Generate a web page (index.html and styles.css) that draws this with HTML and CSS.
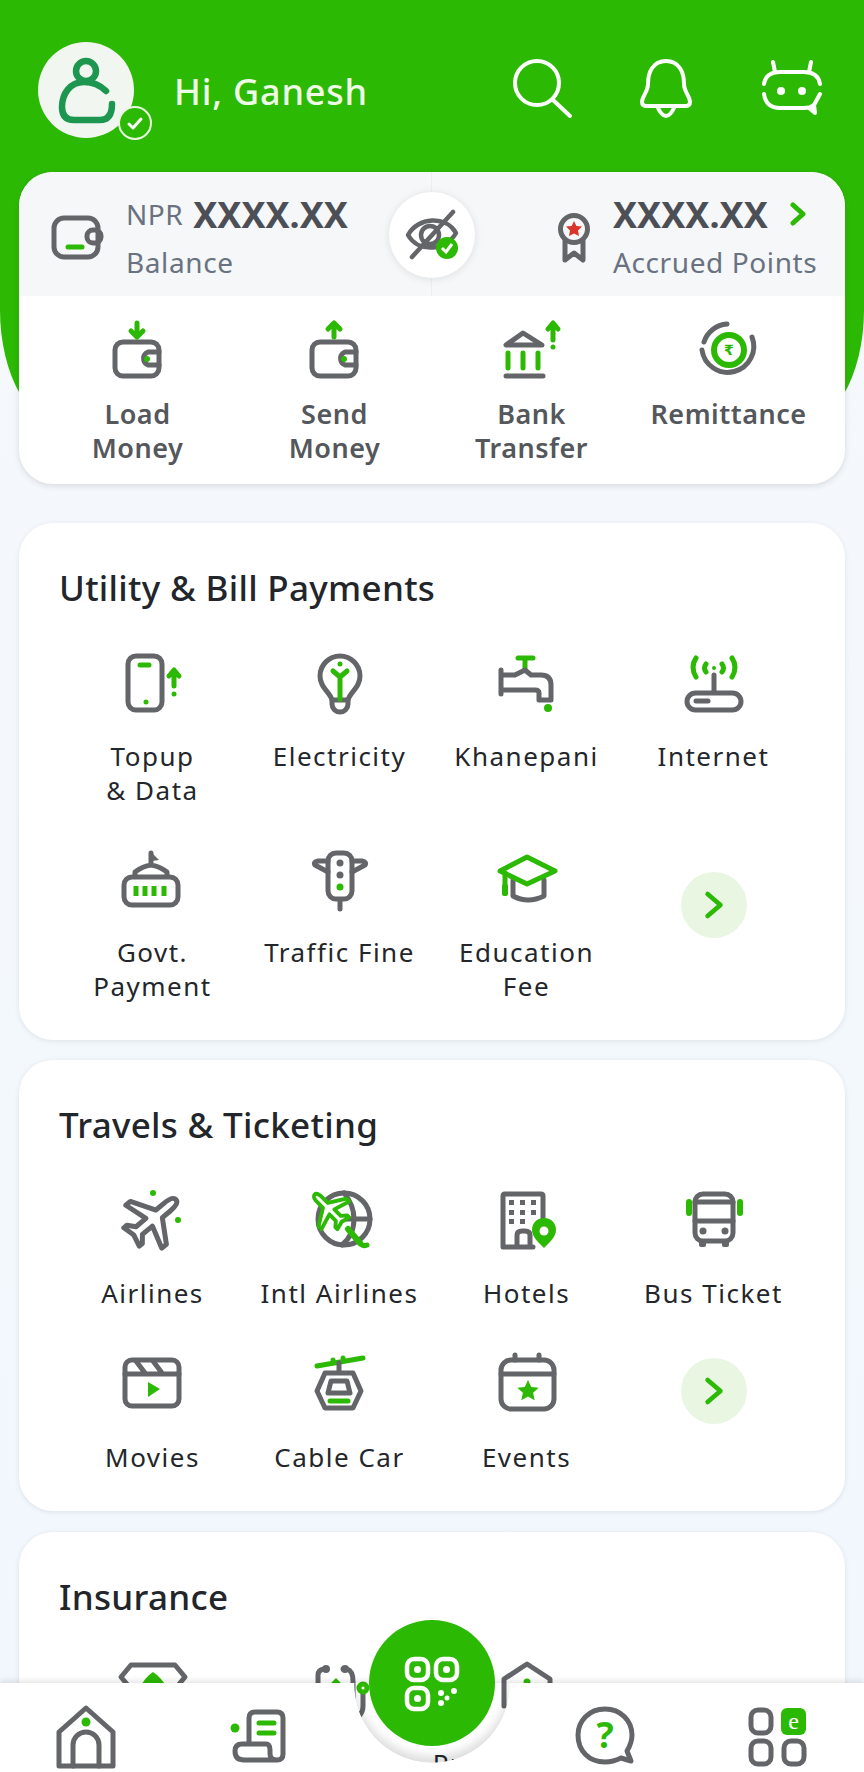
FILE: index.html
```html
<!DOCTYPE html>
<html lang="en">
<head>
<meta charset="UTF-8">
<meta name="viewport" content="width=device-width,initial-scale=1">
<title>Home</title>
<link rel="stylesheet" href="styles.css">
</head>
<body>
<div class="app">
  <div class="greenBg"></div>

  <!-- header -->
  <header class="top">
    <div class="avatar">
      <svg width="96" height="96" viewBox="0 0 96 96"><circle class="av" cx="48" cy="29" r="10"/><path class="av" d="M68 49C62 43 54 40 46 40C32 40 24 52 24 65Q24 78 36 78H62Q74 78 74 62"/></svg>
      <span class="tick"><svg width="34" height="34" viewBox="0 0 34 34"><circle cx="17" cy="17" r="16" fill="#2cb903" stroke="#e8f8e0" stroke-width="2"/><path d="M11 18l4 4 8-9" fill="none" stroke="#fff" stroke-width="3" stroke-linecap="round" stroke-linejoin="round"/></svg></span>
    </div>
    <div class="hi">Hi, Ganesh</div>
    <div class="topIcons">
      <svg class="ic w" viewBox="0 0 64 64"><circle cx="27" cy="25" r="22"/><path d="M43 42L60 58"/></svg>
      <svg class="ic w" viewBox="0 0 64 64"><path d="M31 3C18 3 13 14 13 26C13 34 7 38 7 44Q7 48 12 48H50Q55 48 55 44C55 38 49 34 49 26C49 14 44 3 31 3Z"/><path d="M22 48Q31 68 40 48"/></svg>
      <svg class="ic w" viewBox="0 0 64 64"><path d="M4 26Q6 14 20 14H44Q58 14 60 26"/><path d="M4 36Q6 50 20 50H44Q50 50 54 47L60 36"/><path d="M54 47L55 55L49 50"/><path d="M15 14L13 4M49 14L51 4"/><circle class="wf" cx="21" cy="33" r="4"/><circle class="wf" cx="42" cy="33" r="4"/></svg>
    </div>
  </header>

  <!-- balance card -->
  <section class="hero">
    <div class="bal">
      <div class="balCol left">
        <svg class="walletSm" viewBox="0 0 56 48"><rect class="g" x="4" y="4" width="44" height="39" rx="10"/><rect class="g" x="37" y="16" width="14" height="13" rx="6" fill="#f6f7f8"/><path class="a" d="M18 33H32"/></svg>
        <div>
          <div class="amt"><small>NPR</small> <b>XXXX.XX</b></div>
          <div class="sub">Balance</div>
        </div>
      </div>
      <div class="balCol right">
        <svg class="medal" viewBox="0 0 40 56"><circle class="g" cx="20" cy="19" r="13.500"/><path class="g" d="M11 31V50L20 43L29 50V31"/><path d="M20 11l2.400 5 5.600.6-4 3.900 1 5.600-5-2.700-5 2.700 1-5.600-4-3.900 5.600-.6z" fill="#d9352a"/></svg>
        <div>
          <div class="amt"><b>XXXX.XX</b><svg class="chev" viewBox="0 0 16 24"><path class="a" d="M3 3L13 12L3 21"/></svg></div>
          <div class="sub">Accrued Points</div>
        </div>
      </div>
      <div class="eye">
        <svg class="ic" viewBox="0 0 64 64"><path class="g thin" d="M8 32C18 14 46 12 56 30C46 48 18 50 8 32Z"/><circle class="g thin" cx="30" cy="32" r="9"/><path class="g thin" d="M12 54L53 9"/><circle cx="47" cy="45" r="11" fill="#2cb903"/><path d="M42 45L46 49L52 41" fill="none" stroke="#fff" stroke-width="3"/></svg>
      </div>
    </div>
    <div class="actions">
      <div class="act">
        <svg class="ic" viewBox="0 0 64 64"><rect class="g" x="9" y="22" width="44" height="34" rx="8"/><path class="g" d="M53 32H42A7 7 0 0 0 42 45H53"/><circle class="gf" cx="41" cy="39" r="3"/><path class="a" d="M31 3V15M25 11L31 17L37 11"/></svg>
        <span>Load<br>Money</span>
      </div>
      <div class="act">
        <svg class="ic" viewBox="0 0 64 64"><rect class="g" x="9" y="22" width="44" height="34" rx="8"/><path class="g" d="M53 32H42A7 7 0 0 0 42 45H53"/><circle class="gf" cx="41" cy="39" r="3"/><path class="a" d="M31 17V5M25 9L31 3L37 9"/></svg>
        <span>Send<br>Money</span>
      </div>
      <div class="act">
        <svg class="ic" viewBox="0 0 64 64"><path class="g" d="M23 13L6 25H42Z"/><path class="a" d="M8 33V48M23 33V48M38 33V48"/><path class="g" d="M6 56H43" stroke-width="6"/><path class="a" d="M53 20V4M48 9L53 3L58 9M53 27V27"/></svg>
        <span>Bank<br>Transfer</span>
      </div>
      <div class="act">
        <svg class="ic" viewBox="0 0 64 64"><path class="g" d="M30 4A26 26 0 0 0 7 22"/><path class="g" d="M55 17A26 26 0 1 1 5 30"/><circle class="a thick" cx="32" cy="30" r="15"/><text class="rs" x="32" y="35" text-anchor="middle">₹</text></svg>
        <span>Remittance</span>
      </div>
    </div>
  </section>

  <!-- utility -->
  <section class="card first">
    <h2>Utility &amp; Bill Payments</h2>
    <div class="grid">
      <div class="item">
        <svg class="ic" viewBox="0 0 64 64"><rect class="g" x="7" y="6" width="34" height="54" rx="8"/><path class="a" d="M19 15H28M53 36V21M48 26L53 20L58 26"/><circle class="gf" cx="25" cy="52" r="2.500"/><circle class="gf" cx="53" cy="44" r="2.500"/></svg>
        <span>Topup<br>&amp; Data</span>
      </div>
      <div class="item">
        <svg class="ic" viewBox="0 0 64 64"><path class="g" d="M24 50C22 42 12 38 12 26A20 20 0 0 1 52 26C52 38 42 42 40 50Z"/><path class="g" d="M24 50V54A8 8 0 0 0 40 54V50"/><path class="a" d="M32 49V27M25 21L32 27L39 21"/><circle class="gf" cx="32" cy="14" r="2.500"/></svg>
        <span>Electricity</span>
      </div>
      <div class="item">
        <svg class="ic" viewBox="0 0 64 64"><path class="a" d="M23 8H38M30 8V19"/><path class="g" d="M6 25H20L30 20L36 25H46Q56 25 56 35V50H44V43Q44 40 40 40H6M6 20V44"/><circle class="gf" cx="53" cy="58" r="4"/></svg>
        <span>Khanepani</span>
      </div>
      <div class="item">
        <svg class="ic" viewBox="0 0 64 64"><path class="g" d="M32 25V42"/><rect class="g" x="5" y="43" width="54" height="17" rx="8.500"/><path class="g" d="M14 51H26"/><path class="a" d="M14 8Q8 17 14 27M50 8Q56 17 50 27M24 14Q21 18 24 22M40 14Q43 18 40 22"/><circle class="gf" cx="32" cy="18" r="2"/></svg>
        <span>Internet</span>
      </div>
      <div class="item">
        <svg class="ic" viewBox="0 0 64 64"><rect class="g" x="3" y="31" width="54" height="28" rx="8"/><path class="g" d="M14 30V26Q22 20 30 19Q38 20 46 26V30M30 19V7"/><path class="fl" d="M30 6L38 14L31 15Z"/><path class="a bar" d="M15 40V50M24 40V50M33 40V50M43 40V50"/></svg>
        <span>Govt.<br>Payment</span>
      </div>
      <div class="item">
        <svg class="ic" viewBox="0 0 64 64"><rect class="g" x="20" y="7" width="24" height="46" rx="8"/><path class="g" d="M32 54V63M20 15H10Q5 16 7 19L20 26M44 15H54Q59 16 57 19L44 26"/><circle class="fl" cx="32" cy="17" r="3.500"/><circle class="fl" cx="32" cy="29" r="3.500"/><circle class="gf" cx="32" cy="41" r="3.500"/></svg>
        <span>Traffic Fine</span>
      </div>
      <div class="item">
        <svg class="ic" viewBox="0 0 64 64"><path class="g" d="M18 34V50Q33 58 49 50V34"/><path class="a" d="M32 11L60 25L32 38L5 25Z"/><path class="a" d="M10 27V40"/><rect class="gf" x="7" y="38" width="6" height="12" rx="2"/></svg>
        <span>Education<br>Fee</span>
      </div>
      <div class="item"><div class="more m1"><svg viewBox="0 0 24 32" width="22" height="30"><path class="a" d="M5 4L19 16L5 28"/></svg></div></div>
    </div>
  </section>

  <!-- travels -->
  <section class="card">
    <h2>Travels &amp; Ticketing</h2>
    <div class="grid tight">
      <div class="item">
        <svg class="ic" viewBox="0 0 64 64"><path class="g" transform="rotate(50 32 32)" d="M32 2C36 2 37 8 37 14V24L60 38V44L37 37V50L44 56V60L32 57L20 60V56L27 50V37L4 44V38L27 24V14C27 8 28 2 32 2Z"/><circle class="gf" cx="32" cy="6" r="3"/><circle class="gf" cx="57" cy="33" r="3"/></svg>
        <span>Airlines</span>
      </div>
      <div class="item">
        <svg class="ic" viewBox="0 0 64 64"><circle class="g" cx="36" cy="32" r="26"/><path class="g" d="M36 6Q46 18 46 32Q46 48 34 58M36 32H62"/><path class="a wht" transform="translate(-1 0) rotate(-45 22.400 22.400) scale(.7)" d="M32 2C36 2 37 8 37 14V24L60 38V44L37 37V50L44 56V60L32 57L20 60V56L27 50V37L4 44V38L27 24V14C27 8 28 2 32 2Z"/><path class="a thick" d="M40 42L52 56"/><path class="a" d="M52 56Q55 60 59 58"/></svg>
        <span>Intl Airlines</span>
      </div>
      <div class="item">
        <svg class="ic" viewBox="0 0 64 64"><path class="g" d="M8 60V9Q8 7 10 7H46Q48 7 48 9V34M8 60H38M22 60V48Q22 44 27 44H30Q35 44 35 48V60"/><g class="fl"><rect x="14" y="13" width="5" height="5"/><rect x="25" y="13" width="5" height="5"/><rect x="36" y="13" width="5" height="5"/><rect x="14" y="23" width="5" height="5"/><rect x="25" y="23" width="5" height="5"/><rect x="36" y="23" width="5" height="5"/><rect x="14" y="32" width="5" height="5"/><rect x="25" y="32" width="5" height="5"/></g><path class="gf" d="M49 31C57 31 61 37 61 43C61 50 54 56 49 61C44 56 37 50 37 43C37 37 41 31 49 31Z"/><circle cx="49" cy="44" r="4.500" fill="#fff"/></svg>
        <span>Hotels</span>
      </div>
      <div class="item">
        <svg class="ic" viewBox="0 0 64 64"><rect class="g" x="13" y="7" width="38" height="47" rx="8"/><path class="g" d="M13 15H51" stroke-width="6"/><path class="g" d="M13 34H51"/><circle class="fl" cx="21" cy="44" r="3.500"/><circle class="fl" cx="43" cy="44" r="3.500"/><rect class="fl" x="17" y="54" width="7" height="6" rx="2"/><rect class="fl" x="40" y="54" width="7" height="6" rx="2"/><path class="a thick" d="M7 15V26M58 15V26"/></svg>
        <span>Bus Ticket</span>
      </div>
      <div class="item">
        <svg class="ic" viewBox="0 0 64 64"><rect class="g" x="4" y="9" width="54" height="46" rx="7"/><path class="g" d="M4 23H58M15 10L24 22M32 10L41 22"/><path class="gf" d="M27 31L39 38L27 46Z"/></svg>
        <span>Movies</span>
      </div>
      <div class="item">
        <svg class="ic" viewBox="0 0 64 64"><path class="a" d="M9 15L55 7"/><circle class="gf" cx="25" cy="9" r="2.500"/><circle class="gf" cx="35" cy="7" r="2.500"/><path class="g" d="M31 12V21"/><path class="g" d="M17 22H45L53 40L45 57H17L9 40Z"/><path class="g" d="M20 42L23 30H39L42 42Z"/><path class="a" d="M22 50H40"/></svg>
        <span>Cable Car</span>
      </div>
      <div class="item">
        <svg class="ic" viewBox="0 0 64 64"><rect class="g" x="6" y="9" width="53" height="49" rx="10"/><path class="g" d="M6 23H59M20 4V9M44 4V9"/><path class="gf" d="M33 29l3.200 7 7.500.8-5.600 5 1.600 7.400-6.700-3.800-6.700 3.800 1.600-7.400-5.600-5 7.500-.8z"/></svg>
        <span>Events</span>
      </div>
      <div class="item"><div class="more m2"><svg viewBox="0 0 24 32" width="22" height="30"><path class="a" d="M5 4L19 16L5 28"/></svg></div></div>
    </div>
  </section>

  <!-- insurance, runs under the bottom bar -->
  <section class="card last">
    <h2>Insurance</h2>
    <div class="grid partly">
      <div class="item">
        <svg class="ic" viewBox="0 0 64 64"><path class="g" d="M10 4H54L64 16L54 28H10L0 16Z"/><path class="gf" d="M18 28Q24 16 32 11Q40 16 47 28Z"/></svg>
      </div>
      <div class="item">
        <svg class="ic" viewBox="0 0 64 64"><path class="g" d="M10 30V14Q10 9 16 8M35 8H39Q45 10 45 20V38M55 32V45Q55 52 50 56"/><circle class="fl" cx="18" cy="8" r="4"/><circle class="fl" cx="37" cy="8" r="4"/><path class="gf" d="M23 30V22L28 17L33 22V30Z"/><circle class="a" cx="55" cy="27" r="4"/></svg>
      </div>
      <div class="item">
        <svg class="ic" viewBox="0 0 64 64"><path class="g" d="M9 45V18L32 3L55 18V45"/><circle class="gf" cx="32" cy="21" r="3.500"/></svg>
        <span class="peek">Property</span>
      </div>
      <div class="item"></div>
    </div>
  </section>

  <!-- bottom bar -->
  <div class="cradle"></div>
  <nav class="bottom">
    <svg class="ic" viewBox="0 0 64 64"><path class="g" d="M31 3L4 27V61H58V27Z"/><path class="g" d="M18 61V40A13 13 0 0 1 44 40V61"/><circle class="gf" cx="31" cy="17" r="4.500"/></svg>
    <svg class="ic" viewBox="0 0 64 64"><path class="g" d="M21 37V13Q21 7 27 7H49Q55 7 55 13V49Q55 55 49 55H16Q7 55 7 46Q7 39 14 39H38Q42 39 42 45V49Q42 55 49 55"/><path class="a" d="M31 18H46M31 28H46"/><circle class="gf" cx="7" cy="23" r="4.500"/></svg>
    <div class="navGap"></div>
    <svg class="ic" viewBox="0 0 64 64"><path class="g" d="M32 4C16 4 5 16 5 30C5 46 16 57 32 57C38 57 44 55 48 53L58 56L54 46C57 41 59 36 59 30C59 16 48 4 32 4Z"/><text class="qm" x="32" y="43" text-anchor="middle">?</text></svg>
    <svg class="ic" viewBox="0 0 64 64"><rect class="g" x="5" y="5" width="20" height="23" rx="7"/><rect class="g" x="5" y="36" width="20" height="23" rx="7"/><rect class="g" x="38" y="36" width="20" height="23" rx="7"/><rect class="gf" x="35" y="3" width="25" height="27" rx="6"/><text class="eG" x="47.500" y="24" text-anchor="middle">e</text></svg>
  </nav>
  <div class="fab">
    <svg class="ic" viewBox="0 0 64 64"><rect class="q" x="7" y="9" width="21" height="21" rx="7"/><rect class="q" x="36" y="9" width="21" height="21" rx="7"/><rect class="q" x="7" y="38" width="21" height="21" rx="7"/><g fill="#fff"><circle cx="17.500" cy="19.500" r="3.500"/><circle cx="46.500" cy="19.500" r="3.500"/><circle cx="17.500" cy="48.500" r="3.500"/><circle cx="41" cy="43" r="3"/><circle cx="54" cy="41" r="3"/><circle cx="47" cy="48" r="2.500"/><circle cx="41" cy="53" r="3"/></g></svg>
  </div>
</div>
</body>
</html>
```

FILE: styles.css
```css
:root{--green:#2cb903;--gray:#636569;--txt:#23262a;--sub:#687280;--bg:#f3f8fd}
*{box-sizing:border-box;margin:0;padding:0}
html,body{height:100%}
body{background:var(--bg);font-family:"Noto Sans",Arial,sans-serif;color:var(--txt);overflow:hidden}
.app{position:relative;width:864px;height:1772px;overflow:hidden;background:linear-gradient(#f6f9fc,#f1f7fd)}
.greenBg{position:absolute;left:0;top:0;width:864px;height:430px;background:var(--green);border-radius:0 0 70px 70px/0 0 120px 120px}

/* icons */
.ic{display:block;width:64px;height:64px;overflow:visible;flex:none}
.g,.a,.w path,.w circle,.q{fill:none;stroke-linecap:round;stroke-linejoin:round}
.g{stroke:var(--gray);stroke-width:5}
.g.thin{stroke-width:4.500}
.a{stroke:var(--green);stroke-width:5}
.a.thick{stroke-width:6}
.a.bar{stroke-linecap:butt}
.a.wht{fill:#fff;stroke-width:5.500}
.gf{fill:var(--green)}
.fl{fill:var(--gray)}
.w path,.w circle{stroke:#fff;stroke-width:4}
.w circle.wf{fill:#fff;stroke:none}
.q{stroke:#fff;stroke-width:4.500}
.rs{font:700 14px "DejaVu Sans",sans-serif;fill:var(--green)}
.qm{font:700 36px "Noto Sans",sans-serif;fill:var(--green)}
.eG{font:400 24px "Liberation Serif",serif;fill:#fff}

/* header */
.top{position:relative;display:flex;align-items:center;height:172px;padding:8px 40px 0 38px}
.avatar{position:relative;width:96px;height:96px;border-radius:50%;background:#f2f6f1;flex:none}
.avatar svg{display:block}
.av{fill:none;stroke:#1d9650;stroke-width:6.500;stroke-linecap:round;stroke-linejoin:round}
.tick{position:absolute;right:-18px;bottom:-2px;width:34px;height:34px}
.hi{margin-left:40px;padding-top:3px;font-size:36px;font-weight:500;color:#eefbe6;letter-spacing:.8px}
.topIcons{margin-left:auto;display:flex;gap:61px}

/* balance card */
.hero{position:relative;margin:0 19px;height:312px;background:#fff;border-radius:34px;overflow:hidden;box-shadow:0 2px 6px rgba(60,70,80,.16)}
.bal{position:relative;display:flex;height:124px;background:#f6f7f8}
.balCol{display:flex;align-items:center;width:50%}
.balCol.left{padding:8px 0 0 31px;gap:20px;border-right:1px solid #eceeef}
.balCol.right{padding:8px 0 0 122px;gap:19px}
.walletSm{width:56px;height:48px;flex:none}
.medal{width:40px;height:56px;flex:none}
.amt{display:flex;align-items:center;gap:10px;height:44px;color:#4c5056}
.amt small{font-size:28px;color:var(--sub);letter-spacing:.5px}
.amt b{font-size:36px;font-weight:700}
.chev{width:16px;height:24px;margin:-1px 0 0 12px}
.sub{margin-top:4px;font-size:28px;line-height:44px;color:var(--sub);letter-spacing:.6px}
.eye{position:absolute;left:370px;top:20px;width:86px;height:86px;padding:11px;border-radius:50%;background:#fff;box-shadow:0 1px 8px rgba(0,0,0,.1)}
.actions{display:grid;grid-template-columns:repeat(4,197px);padding:24px 20px 0}
.act{display:flex;flex-direction:column;align-items:center;gap:13px;text-align:center;font-size:27px;font-weight:600;line-height:33.500px;color:#54575b;letter-spacing:.5px}

/* cards */
.card{margin:20px 19px 0;padding:43px 38px 37px 40px;background:#fff;border-radius:34px;box-shadow:0 1px 5px rgba(60,70,80,.12)}
.card.first{margin-top:39px}
.card.last{margin-top:21px;height:300px}
h2{font-size:35px;font-weight:500;line-height:44px;color:#22262b;letter-spacing:.3px}
.grid{display:grid;grid-template-columns:repeat(4,187px);row-gap:39px;margin-top:40px}
.grid.tight{row-gap:41px}
.grid.partly{margin-top:42px}
.item{display:flex;flex-direction:column;align-items:center;gap:25px;text-align:center;font-size:26px;line-height:34px;letter-spacing:1.500px;color:#23262a}
.peek{margin:-4px 70px 0 0;white-space:nowrap}
.more{display:flex;align-items:center;justify-content:center;width:66px;height:66px;border-radius:50%;background:#e8f6e2}
.more.m1{margin-top:26px}
.more.m2{margin-top:7px}

/* bottom bar */
.bottom{position:absolute;left:0;bottom:0;width:864px;height:89px;display:flex;gap:109px;padding:22px 0 0 55px;background:radial-gradient(circle 78px at 432px 2px,transparent 99%,#fff 100%);box-shadow:0 -3px 5px rgba(0,0,0,.09)}
.navGap{width:63px;flex:none}
.cradle{position:absolute;left:354px;top:1607px;width:156px;height:156px;border-radius:50%;box-shadow:inset 0 -7px 10px rgba(0,0,0,.13);clip-path:inset(76px 0 0 0)}
.fab{position:absolute;left:369px;top:1620px;width:126px;height:126px;padding:30px 31px;border-radius:50%;background:var(--green)}
```
